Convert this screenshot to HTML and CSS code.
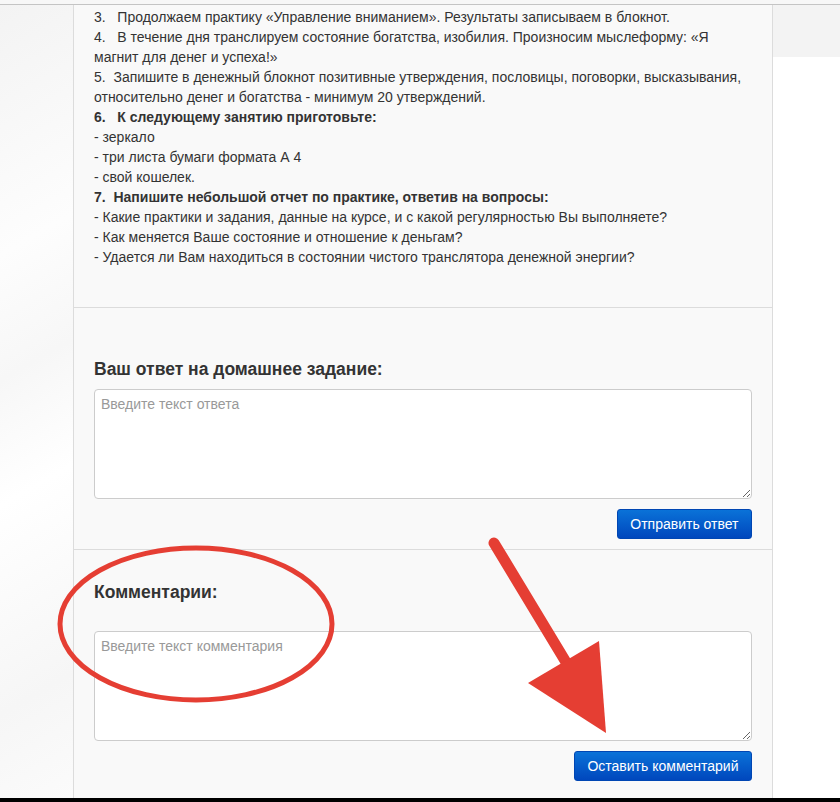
FILE: index.html
```html
<!DOCTYPE html>
<html lang="ru">
<head>
    <meta charset="UTF-8">
    <meta name="viewport" content="width=device-width, initial-scale=1.0">
    <title>Домашнее задание</title>
    <link rel="stylesheet" href="styles.css">
</head>
<body>
    <div class="topbar"></div>

    <div class="page">
        <div class="side side-left"></div>

        <div class="panel">
            <div class="lesson">
                <p>3.&nbsp;&nbsp; Продолжаем практику «Управление вниманием». Результаты записываем в блокнот.</p>
                <p>4.&nbsp;&nbsp; В течение дня транслируем состояние богатства, изобилия. Произносим мыслеформу: «Я магнит для денег и успеха!»</p>
                <p>5.&nbsp; Запишите в денежный блокнот позитивные утверждения, пословицы, поговорки, высказывания, относительно денег и богатства - минимум 20 утверждений.</p>
                <p><b>6.&nbsp;&nbsp; К следующему занятию приготовьте:</b></p>
                <p>- зеркало</p>
                <p>- три листа бумаги формата А 4</p>
                <p>- свой кошелек.</p>
                <p><b>7.&nbsp; Напишите небольшой отчет по практике, ответив на вопросы:</b></p>
                <p>- Какие практики и задания, данные на курсе, и с какой регулярностью Вы выполняете?</p>
                <p>- Как меняется Ваше состояние и отношение к деньгам?</p>
                <p>- Удается ли Вам находиться в состоянии чистого транслятора денежной энергии?</p>
            </div>

            <form class="block block-answer">
                <h3>Ваш ответ на домашнее задание:</h3>
                <textarea placeholder="Введите текст ответа"></textarea>
                <div class="actions">
                    <button type="button" class="btn">Отправить ответ</button>
                </div>
            </form>

            <form class="block block-comments">
                <h3>Комментарии:</h3>
                <textarea placeholder="Введите текст комментария"></textarea>
                <div class="actions">
                    <button type="button" class="btn">Оставить комментарий</button>
                </div>
            </form>
        </div>

        <div class="side side-right">
            <div class="side-band"></div>
        </div>
    </div>

    <div class="taskbar"></div>

    <!-- red marks drawn over the screenshot -->
    <svg class="marks" width="840" height="802" viewBox="0 0 840 802">
        <ellipse cx="196" cy="624" rx="136" ry="76" fill="none" stroke="#e53e33" stroke-width="5"/>
        <line x1="494" y1="543" x2="578" y2="682" stroke="#e53e33" stroke-width="11" stroke-linecap="round"/>
        <polygon points="599,641 528,683 606,733" fill="#e53e33"/>
    </svg>
</body>
</html>
```

FILE: styles.css
```css
* {
    margin: 0;
    padding: 0;
    box-sizing: border-box;
}

body {
    font-family: "Liberation Sans", Arial, sans-serif;
    font-size: 14px;
    line-height: 20px;
    color: #333;
    background: #fff;
    position: relative;
    overflow: hidden;
}

.topbar {
    height: 5px;
    background: #f7f7f7;
    border-bottom: 1px solid #c4c4c4;
}

.page {
    display: flex;
    height: 793px;
}

.side-left {
    width: 73px;
    background: linear-gradient(150deg, #f3f3f3 0%, #fdfdfd 30%, #f7f7f7 45%, #ffffff 60%, #f6f6f6 85%, #fbfbfb 100%);
}

.side-right {
    flex: 1;
    background: #fff;
}

.side-band {
    height: 52px;
    background: #f3f3f3;
}

.panel {
    width: 700px;
    background: #f9f9f9;
    border-left: 1px solid #dcdcdc;
    border-right: 1px solid #dcdcdc;
}

.lesson {
    padding: 2px 20px 40px;
}

.block {
    border-top: 1px solid #dcdcdc;
    padding: 0 20px 10px;
}

.block-answer {
    padding-top: 51px;
}

.block-comments {
    padding-top: 32px;
}

.block h3 {
    font-size: 17.5px;
    line-height: 20px;
    font-weight: bold;
    color: #333;
    margin-bottom: 10px;
}

.block-comments h3 {
    margin-bottom: 29px;
}

textarea {
    display: block;
    width: 100%;
    height: 110px;
    padding: 4px 6px;
    border: 1px solid #ccc;
    border-radius: 4px;
    background: #fff;
    font-family: "Liberation Sans", Arial, sans-serif;
    font-size: 14px;
    line-height: 20px;
    color: #333;
    resize: vertical;
}

textarea::placeholder {
    color: #999;
}

.actions {
    display: flex;
    justify-content: flex-end;
    margin-top: 10px;
}

.btn {
    height: 30px;
    padding: 0 12.5px;
    border: 1px solid #0046b3;
    border-radius: 3px;
    background: linear-gradient(#0a72d8, #0047bd);
    color: #fff;
    font-family: "Liberation Sans", Arial, sans-serif;
    font-size: 14px;
    cursor: pointer;
}

.taskbar {
    height: 4px;
    background: #000;
}

.marks {
    position: absolute;
    top: 0;
    left: 0;
    pointer-events: none;
}
```
